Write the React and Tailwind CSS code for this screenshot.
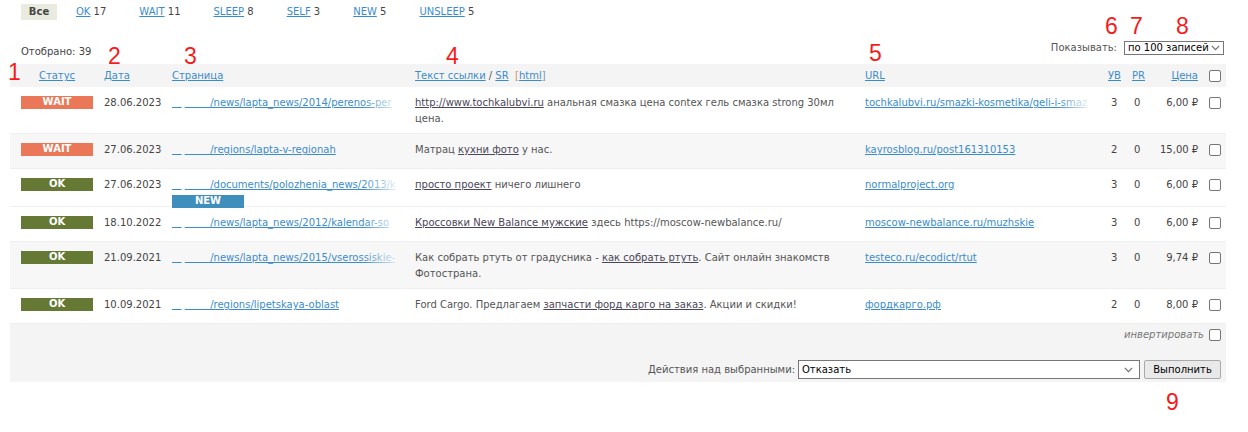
import React from "react";

const COLS =
  "grid grid-cols-[94px_68px_243px_450px_243px_24px_28px_44px_22px]";

function Checkbox() {
  return (
    <div className="w-[12px] h-[12px] border border-[#767676] rounded-[2px] bg-white" />
  );
}

function Chevron() {
  return (
    <svg width="9" height="6" viewBox="0 0 9 6" className="shrink-0">
      <path d="M0.8 0.8 L4.5 4.6 L8.2 0.8" fill="none" stroke="#6b6b6b" strokeWidth="1.1" />
    </svg>
  );
}

function Status({ s }) {
  const cls = s === "WAIT" ? "bg-[#ea7858]" : "bg-[#657935]";
  return (
    <div
      className={
        "mt-[1px] h-[13px] w-[72px] leading-[12px] text-center font-bold text-white text-[10px] " +
        cls
      }
    >
      {s}
    </div>
  );
}

function HiddenDomain() {
  return (
    <>
      <span className="underline">{"\u00a0\u00a0\u00a0"}</span>
      <span>{"\u00a0"}</span>
      <span className="underline">{"\u00a0\u00a0\u00a0\u00a0\u00a0\u00a0\u00a0\u00a0"}</span>
    </>
  );
}

const rows = [
  {
    status: "WAIT",
    date: "28.06.2023",
    page: "/news/lapta_news/2014/perenos-per",
    fade: true,
    text: (
      <>
        <span className="underline text-[#4a4658]">http://www.tochkalubvi.ru</span> анальная смазка цена
        contex гель смазка strong 30мл цена.
      </>
    ),
    url: "tochkalubvi.ru/smazki-kosmetika/geli-i-smaz",
    urlFade: true,
    uv: "3",
    pr: "0",
    price: "6,00 ₽",
    gray: false,
  },
  {
    status: "WAIT",
    date: "27.06.2023",
    page: "/regions/lapta-v-regionah",
    text: (
      <>
        Матрац <span className="underline text-[#4a4658]">кухни фото</span> у нас.
      </>
    ),
    url: "kayrosblog.ru/post161310153",
    uv: "2",
    pr: "0",
    price: "15,00 ₽",
    gray: true,
  },
  {
    status: "OK",
    isNew: true,
    date: "27.06.2023",
    page: "/documents/polozhenia_news/2013/k",
    fade: true,
    text: (
      <>
        <span className="underline text-[#4a4658]">просто проект</span> ничего лишнего
      </>
    ),
    url: "normalproject.org",
    uv: "3",
    pr: "0",
    price: "6,00 ₽",
    gray: false,
  },
  {
    status: "OK",
    date: "18.10.2022",
    page: "/news/lapta_news/2012/kalendar-so",
    fade: true,
    text: (
      <>
        <span className="underline text-[#4a4658]">Кроссовки New Balance мужские</span> здесь
        https://moscow-newbalance.ru/
      </>
    ),
    url: "moscow-newbalance.ru/muzhskie",
    uv: "3",
    pr: "0",
    price: "6,00 ₽",
    gray: false,
  },
  {
    status: "OK",
    date: "21.09.2021",
    page: "/news/lapta_news/2015/vserossiskie-",
    fade: true,
    text: (
      <>
        Как собрать ртуть от градусника -{" "}
        <span className="underline text-[#4a4658]">как собрать ртуть</span>. Сайт онлайн знакомств
        Фотострана.
      </>
    ),
    url: "testeco.ru/ecodict/rtut",
    uv: "3",
    pr: "0",
    price: "9,74 ₽",
    gray: true,
  },
  {
    status: "OK",
    date: "10.09.2021",
    page: "/regions/lipetskaya-oblast",
    text: (
      <>
        Ford Cargo. Предлагаем{" "}
        <span className="underline text-[#4a4658]">запчасти форд карго на заказ</span>. Акции и скидки!
      </>
    ),
    url: "фордкарго.рф",
    uv: "2",
    pr: "0",
    price: "8,00 ₽",
    gray: false,
  },
];

function Row({ r }) {
  return (
    <div
      className={
        COLS +
        " pt-[8px] pb-[6px] min-h-[35px] border-b border-[#efefef] leading-[16px] " +
        (r.gray ? "bg-[#f7f7f7]" : "bg-white")
      }
    >
      <div className="pl-[11px]">
        <Status s={r.status} />
      </div>
      <div className="text-[#444]">{r.date}</div>
      <div>
        <div className="relative w-[230px] overflow-hidden whitespace-nowrap text-[#3a8ccd]">
          <HiddenDomain />
          <span className="underline">{r.page}</span>
          {r.fade && (
            <div
              className={
                "absolute inset-y-0 right-0 w-[40px] bg-linear-to-r from-transparent " +
                (r.gray ? "to-[#f7f7f7]" : "to-white")
              }
            />
          )}
        </div>
        {r.isNew && (
          <div className="mt-[2px] -mb-[8px] h-[13px] w-[72px] bg-[#3f8fbd] text-white font-bold text-[10px] leading-[12px] text-center">
            NEW
          </div>
        )}
      </div>
      <div className="pr-[18px] text-[#555]">{r.text}</div>
      <div>
        <div className="relative w-[228px] overflow-hidden whitespace-nowrap text-[#3a8ccd]">
          <span className="underline">{r.url}</span>
          {r.urlFade && (
            <div
              className={
                "absolute inset-y-0 right-0 w-[36px] bg-linear-to-r from-transparent " +
                (r.gray ? "to-[#f7f7f7]" : "to-white")
              }
            />
          )}
        </div>
      </div>
      <div className="pl-[3px] text-[#444]">{r.uv}</div>
      <div className="pl-[2px] text-[#444]">{r.pr}</div>
      <div className="pr-[6px] text-right text-[#444] whitespace-nowrap">{r.price}</div>
      <div className="pl-[5px] pt-[2px]">
        <Checkbox />
      </div>
    </div>
  );
}

function Mark({ n, cls }) {
  return (
    <div
      className={
        "absolute font-['Liberation_Sans',sans-serif] text-[23px] leading-[23px] text-[#f41c1c] " +
        cls
      }
    >
      {n}
    </div>
  );
}

export default function App() {
  return (
    <div className="relative w-[1248px] min-h-[432px] bg-white font-['DejaVu_Sans',sans-serif] text-[10px] text-[#444]">
      {/* Tabs */}
      <div className="flex items-center pt-[4px] pl-[21px] h-[20px] leading-[16px]">
        <div className="h-[16px] w-[36px] bg-[#e8ebde] text-center font-bold text-[#444]">Все</div>
        <div className="ml-[19px]">
          <span className="underline text-[#3a8ccd]">OK</span> 17
        </div>
        <div className="ml-[33px]">
          <span className="underline text-[#3a8ccd]">WAIT</span> 11
        </div>
        <div className="ml-[33px]">
          <span className="underline text-[#3a8ccd]">SLEEP</span> 8
        </div>
        <div className="ml-[33px]">
          <span className="underline text-[#3a8ccd]">SELF</span> 3
        </div>
        <div className="ml-[33px]">
          <span className="underline text-[#3a8ccd]">NEW</span> 5
        </div>
        <div className="ml-[33px]">
          <span className="underline text-[#3a8ccd]">UNSLEEP</span> 5
        </div>
      </div>

      <div className="ml-[10px] w-[1216px]">
        {/* Count + per page */}
        <div className="mt-[20px] h-[24px] flex justify-between">
          <div className="pl-[11px] pt-[4px] leading-[16px]">Отобрано: 39</div>
          <div className="flex items-start pr-[2px]">
            <div className="leading-[14px] mt-[1px] text-[#555]">Показывать:</div>
            <div className="ml-[7px] mt-[1px] w-[100px] h-[14px] border border-[#767676] bg-white flex items-center justify-between pl-[3px] pr-[3px] text-black leading-none">
              <span>по 100 записей</span>
              <Chevron />
            </div>
          </div>
        </div>

        {/* Header */}
        <div className={COLS + " h-[23px] items-center bg-[#f4f4f4] text-[#3a8ccd]"}>
          <div className="pl-[11px]">
            <div className="w-[72px] text-center">
              <span className="underline">Статус</span>
            </div>
          </div>
          <div>
            <span className="underline">Дата</span>
          </div>
          <div>
            <span className="underline">Страница</span>
          </div>
          <div className="whitespace-nowrap">
            <span className="underline">Текст ссылки</span>
            <span className="text-[#555]"> / </span>
            <span className="underline">SR</span>
            {"\u00a0\u00a0"}
            <span className="text-[#c99a66]">[</span>
            <span className="underline">html</span>
            <span className="text-[#7f95ad]">]</span>
          </div>
          <div>
            <span className="underline">URL</span>
          </div>
          <div>
            <span className="underline">УВ</span>
          </div>
          <div>
            <span className="underline">PR</span>
          </div>
          <div className="pr-[6px] text-right">
            <span className="underline">Цена</span>
          </div>
          <div className="pl-[5px] pt-[1px]">
            <Checkbox />
          </div>
        </div>

        {rows.map((r, i) => (
          <Row key={i} r={r} />
        ))}

        {/* Footer */}
        <div className="bg-[#f4f4f4] h-[58px] flex flex-col">
          <div className="flex justify-end items-center pt-[5px] pr-[5px] leading-[12px]">
            <span className="italic text-[#777]">инвертировать</span>
            <div className="ml-[5px]">
              <Checkbox />
            </div>
          </div>
          <div className="mt-[19px] flex justify-end items-center pr-[5px]">
            <span className="text-[#555] mr-[3px]">Действия над выбранными:</span>
            <div className="w-[342px] h-[19px] border border-[#767676] bg-white flex items-center justify-between pl-[3px] pr-[6px] text-black">
              <span>Отказать</span>
              <Chevron />
            </div>
            <div className="ml-[4px] w-[77px] h-[19px] border border-[#a9a9a9] rounded-[2px] bg-[#e9e9e9] flex items-center justify-center text-black">
              Выполнить
            </div>
          </div>
        </div>
      </div>

      {/* Annotation numbers */}
      <Mark n="1" cls="left-[8px] top-[61px]" />
      <Mark n="2" cls="left-[108px] top-[45px]" />
      <Mark n="3" cls="left-[184px] top-[45px]" />
      <Mark n="4" cls="left-[446px] top-[45px]" />
      <Mark n="5" cls="left-[869px] top-[42px]" />
      <Mark n="6" cls="left-[1105px] top-[15px]" />
      <Mark n="7" cls="left-[1130px] top-[15px]" />
      <Mark n="8" cls="left-[1176px] top-[15px]" />
      <Mark n="9" cls="left-[1166px] top-[391px]" />
    </div>
  );
}
